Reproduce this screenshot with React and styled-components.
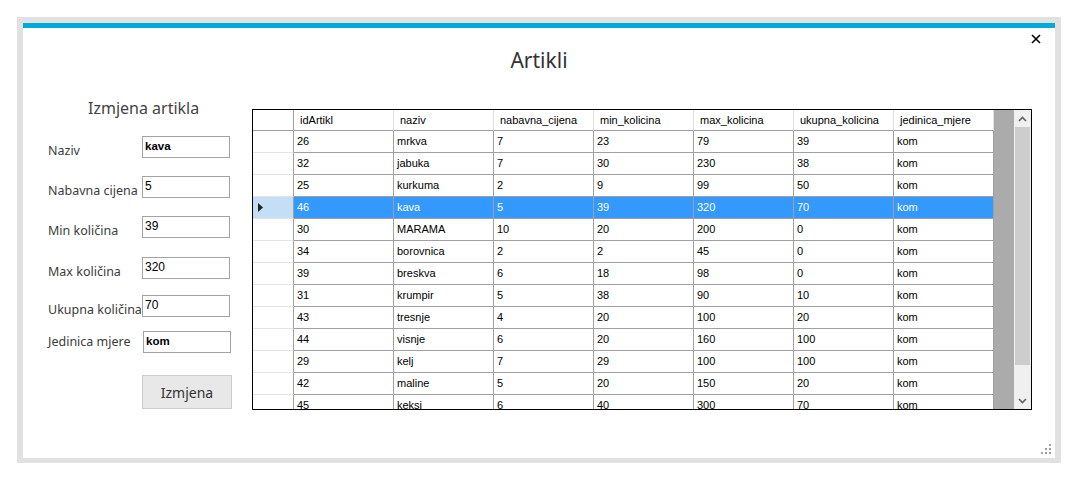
import React from "react";
import styled, { createGlobalStyle } from "styled-components";

const GlobalStyle = createGlobalStyle`
  html, body {
    margin: 0;
    padding: 0;
    background: #ffffff;
  }
  body {
    font-family: "Noto Sans", "Open Sans", sans-serif;
  }
`;

const Window = styled.div`
  margin: 17px 0 0 17px;
  width: 1044px;
  height: 446px;
  box-sizing: border-box;
  border-style: solid;
  border-color: #e1e1e1;
  border-width: 6px 6px 5px 6px;
  background: #ffffff;
  display: flex;
  flex-direction: column;
`;

const AccentBar = styled.div`
  height: 5px;
  background: #00abd9;
`;

const Header = styled.div`
  height: 69px;
  display: grid;
  grid-template-columns: 1fr auto 1fr;
`;

const Title = styled.h1`
  grid-column: 2;
  margin: 0;
  padding-top: 18px;
  font-size: 21px;
  line-height: 28px;
  font-weight: 400;
  color: #333333;
`;

const CloseButton = styled.div`
  grid-column: 3;
  justify-self: end;
  margin: 6px 14px 0 0;
  width: 10px;
  height: 10px;
  display: flex;
`;

const Body = styled.div`
  display: flex;
  padding-left: 25px;
`;

const FormPanel = styled.div`
  width: 204px;
  display: flex;
  flex-direction: column;
`;

const FormHeading = styled.div`
  padding-left: 40px;
  font-size: 16px;
  line-height: 22px;
  color: #444444;
  margin-bottom: 17px;
`;

const FieldRow = styled.div`
  display: flex;
  align-items: flex-start;
  height: 22px;
  margin-top: ${(p) => p.$mt || 0}px;
`;

const Label = styled.label`
  width: 94px;
  height: 22px;
  box-sizing: border-box;
  padding-top: ${(p) => (p.$drop === undefined ? 4 : p.$drop)}px;
  font-size: 12.5px;
  line-height: 22px;
  color: #3c3c3c;
  white-space: nowrap;
`;

const TextBox = styled.div`
  width: 88px;
  height: 22px;
  box-sizing: border-box;
  margin-left: ${(p) => p.$shift || 0}px;
  border: 1px solid #a3a3a3;
  padding: 2px 2px 0 2px;
  font-family: "Liberation Sans", Arial, sans-serif;
  font-size: ${(p) => (p.$bold ? 11.5 : 12)}px;
  line-height: 15px;
  font-weight: ${(p) => (p.$bold ? 700 : 400)};
  color: #000000;
`;

const ActionButton = styled.button`
  margin: 22px 0 0 94px;
  width: 90px;
  height: 34px;
  box-sizing: border-box;
  border: 1px solid #cccccc;
  background: #e8e8e8;
  font-family: "Noto Sans", "Open Sans", sans-serif;
  font-size: 14px;
  color: #333333;
  padding: 0;
`;

const GridFrame = styled.div`
  margin-top: 12px;
  width: 780px;
  height: 301px;
  box-sizing: border-box;
  border: 1px solid #000000;
  display: flex;
  background: #ababab;
`;

const DataArea = styled.div`
  width: 741px;
  height: 299px;
  overflow: hidden;
  background: #ababab;
`;

const Filler = styled.div`
  width: 20px;
  background: #ababab;
`;

const ScrollBar = styled.div`
  width: 17px;
  background: #f0f0f0;
  display: flex;
  flex-direction: column;
`;

const ScrollArrow = styled.div`
  height: 17px;
  display: flex;
  align-items: center;
  justify-content: center;
`;

const ScrollThumb = styled.div`
  height: 238px;
  margin: 0 1px;
  background: #cdcdcd;
`;

const ScrollTrack = styled.div`
  flex: 1;
`;

const Row = styled.div`
  display: grid;
  grid-template-columns: 41px repeat(7, 100px);
  height: ${(p) => (p.$header ? 21 : 22)}px;
  font-family: "Liberation Sans", Arial, sans-serif;
  font-size: 11px;
`;

const RowHead = styled.div`
  box-sizing: border-box;
  border-right: 1px solid #a0a0a0;
  border-bottom: 1px solid ${(p) => (p.$header ? "#a0a0a0" : "#e3e3e3")};
  background: ${(p) => (p.$selected ? "#c4def5" : "#ffffff")};
  display: flex;
  align-items: center;
  padding-left: 5px;
`;

const HeadCell = styled.div`
  box-sizing: border-box;
  border-right: 1px solid #e0e0e0;
  border-bottom: 1px solid #a0a0a0;
  background: #ffffff;
  padding-left: 6px;
  line-height: 20px;
  color: #000000;
  white-space: nowrap;
  overflow: hidden;
`;

const Cell = styled.div`
  box-sizing: border-box;
  border-right: 1px solid #a0a0a0;
  border-bottom: 1px solid #a0a0a0;
  background: ${(p) => (p.$selected ? "#3399ff" : "#ffffff")};
  color: ${(p) => (p.$selected ? "#ffffff" : "#000000")};
  padding-left: 3px;
  line-height: 21px;
  white-space: nowrap;
  overflow: hidden;
`;

const Footer = styled.div`
  flex: 1;
  display: flex;
  justify-content: flex-end;
  align-items: flex-end;
  padding: 0 3px 3px 0;
`;

const columns = [
  "idArtikl",
  "naziv",
  "nabavna_cijena",
  "min_kolicina",
  "max_kolicina",
  "ukupna_kolicina",
  "jedinica_mjere",
];

const rows = [
  [26, "mrkva", 7, 23, 79, 39, "kom"],
  [32, "jabuka", 7, 30, 230, 38, "kom"],
  [25, "kurkuma", 2, 9, 99, 50, "kom"],
  [46, "kava", 5, 39, 320, 70, "kom"],
  [30, "MARAMA", 10, 20, 200, 0, "kom"],
  [34, "borovnica", 2, 2, 45, 0, "kom"],
  [39, "breskva", 6, 18, 98, 0, "kom"],
  [31, "krumpir", 5, 38, 90, 10, "kom"],
  [43, "tresnje", 4, 20, 100, 20, "kom"],
  [44, "visnje", 6, 20, 160, 100, "kom"],
  [29, "kelj", 7, 29, 100, 100, "kom"],
  [42, "maline", 5, 20, 150, 20, "kom"],
  [45, "keksi", 6, 40, 300, 70, "kom"],
];

const fields = [
  { label: "Naziv", value: "kava", mt: 0, bold: true },
  { label: "Nabavna cijena", value: "5", mt: 18 },
  { label: "Min količina", value: "39", mt: 18 },
  { label: "Max količina", value: "320", mt: 19 },
  { label: "Ukupna količina", value: "70", mt: 16 },
  { label: "Jedinica mjere", value: "kom", mt: 14, bold: true, drop: 0, shift: 1 },
];

const selectedId = 46;

function Chevron({ down }) {
  return (
    <svg width="9" height="6" viewBox="0 0 9 6">
      <path
        d={down ? "M1 1 L4.5 4.5 L8 1" : "M1 5 L4.5 1.5 L8 5"}
        fill="none"
        stroke="#606060"
        strokeWidth="1.6"
      />
    </svg>
  );
}

function App() {
  return (
    <>
      <GlobalStyle />
      <Window>
        <AccentBar />
        <Header>
          <Title>Artikli</Title>
          <CloseButton>
            <svg width="10" height="10" viewBox="0 0 10 10">
              <path d="M1 1 L9 9 M9 1 L1 9" stroke="#000" strokeWidth="1.6" />
            </svg>
          </CloseButton>
        </Header>
        <Body>
          <FormPanel>
            <FormHeading>Izmjena artikla</FormHeading>
            {fields.map((f) => (
              <FieldRow key={f.label} $mt={f.mt}>
                <Label $drop={f.drop}>{f.label}</Label>
                <TextBox $bold={f.bold} $shift={f.shift}>
                  {f.value}
                </TextBox>
              </FieldRow>
            ))}
            <ActionButton>Izmjena</ActionButton>
          </FormPanel>
          <GridFrame>
            <DataArea>
              <Row $header>
                <RowHead $header />
                {columns.map((c) => (
                  <HeadCell key={c}>{c}</HeadCell>
                ))}
              </Row>
              {rows.map((r) => {
                const sel = r[0] === selectedId;
                return (
                  <Row key={r[0]}>
                    <RowHead $selected={sel}>
                      {sel && (
                        <svg width="6" height="9" viewBox="0 0 6 9">
                          <path d="M0 0 L5 4.5 L0 9 Z" fill="#222" />
                        </svg>
                      )}
                    </RowHead>
                    {r.map((v, i) => (
                      <Cell key={i} $selected={sel}>
                        {v}
                      </Cell>
                    ))}
                  </Row>
                );
              })}
            </DataArea>
            <Filler />
            <ScrollBar>
              <ScrollArrow>
                <Chevron />
              </ScrollArrow>
              <ScrollThumb />
              <ScrollTrack />
              <ScrollArrow>
                <Chevron down />
              </ScrollArrow>
            </ScrollBar>
          </GridFrame>
        </Body>
        <Footer>
          <svg width="12" height="12" viewBox="0 0 12 12">
            <g fill="#a0a0a0">
              <rect x="9" y="1" width="2" height="2" />
              <rect x="5" y="5" width="2" height="2" />
              <rect x="9" y="5" width="2" height="2" />
              <rect x="1" y="9" width="2" height="2" />
              <rect x="5" y="9" width="2" height="2" />
              <rect x="9" y="9" width="2" height="2" />
            </g>
          </svg>
        </Footer>
      </Window>
    </>
  );
}

export default App;
